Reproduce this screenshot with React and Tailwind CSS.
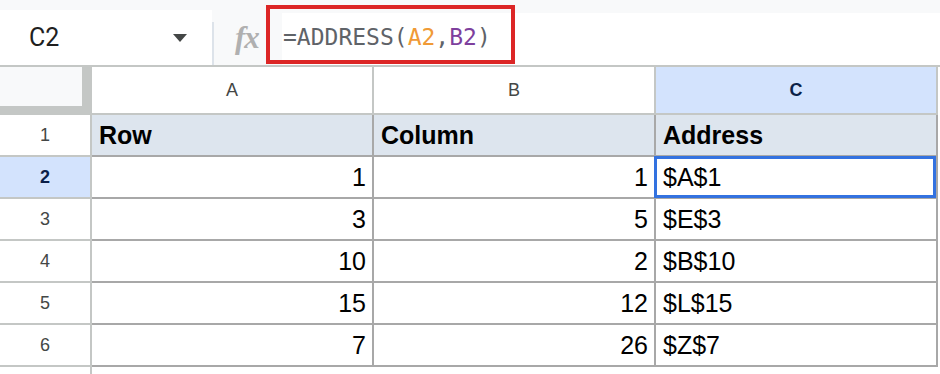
const rows = [
  { n: 2, a: "1", b: "1", c: "$A$1", selected: true },
  { n: 3, a: "3", b: "5", c: "$E$3" },
  { n: 4, a: "10", b: "2", c: "$B$10" },
  { n: 5, a: "15", b: "12", c: "$L$15" },
  { n: 6, a: "7", b: "26", c: "$Z$7" },
];

function Toolbar() {
  return (
    <div className="relative flex h-[67px] border-b-2 border-[#c4c7c5] bg-[#f8f9fa]">
      <div className="mt-[10px] flex h-[55px] w-[212px] items-center bg-white pl-[29px] font-['Roboto'] text-[25px] text-[#1f1f1f]">
        <span className="flex-1">C2</span>
        <svg width="14" height="8" viewBox="0 0 14 8" className="mr-[25px]">
          <path d="M0 0 L14 0 L7 8 Z" fill="#444746" />
        </svg>
      </div>
      <div className="mt-[22px] h-[43px] w-[2px] bg-[#dde3ea]" />
      <div className="flex w-[68px] items-center pl-[21px] pt-[10px]">
        <span className="font-['Liberation_Serif'] text-[31px] font-bold italic leading-none tracking-[-1px] text-[#b0b0b0]">
          fx
        </span>
      </div>
      <div className="mt-[13px] flex h-[52px] flex-1 items-center bg-white pb-[3px] pl-[1px] font-['DejaVu_Sans_Mono'] text-[23px] text-[#5f6368]">
        <span>=ADDRESS(</span>
        <span className="text-[#f09a36]">A2</span>
        <span>,</span>
        <span className="text-[#7e3f9d]">B2</span>
        <span>)</span>
      </div>
      <div className="absolute left-[266px] top-[5px] h-[59px] w-[249px] border-4 border-[#dc2626]" />
    </div>
  );
}

function HeaderRow() {
  return (
    <div className="flex h-[48px]">
      <div className="h-[48px] w-[92px] shrink-0 bg-[#c4c7c5]">
        <div className="h-[39px] w-[82px] bg-[#f8f9fa]" />
      </div>
      {["A", "B"].map((l) => (
        <div
          key={l}
          className="flex w-[282px] shrink-0 items-center justify-center border-b-2 border-r-2 border-[#c4c7c5] bg-white text-[18px] text-[#444746]"
        >
          {l}
        </div>
      ))}
      <div className="flex w-[282px] shrink-0 items-center justify-center border-b-2 border-r-2 border-[#c4c7c5] bg-[#d3e3fd] text-[18px] font-bold text-[#0b1f48]">
        C
      </div>
    </div>
  );
}

function RowHeader({ n, selected }) {
  return (
    <div
      className={
        "flex w-[92px] shrink-0 items-center justify-center border-b-2 border-r-2 border-[#c4c7c5] text-[18px] " +
        (selected ? "bg-[#d3e3fd] font-bold text-[#0b1f48]" : "bg-white text-[#444746]")
      }
    >
      {n}
    </div>
  );
}

export default function App() {
  return (
    <div className="h-[374px] w-[940px] overflow-hidden bg-white font-['Liberation_Sans',Arial,sans-serif]">
      <Toolbar />
      <HeaderRow />

      <div className="flex h-[42px]">
        <RowHeader n={1} />
        {["Row", "Column", "Address"].map((t) => (
          <div
            key={t}
            className="flex w-[282px] shrink-0 items-center border-b-2 border-r-2 border-[#a8a8a8] bg-[#dde5ee] pl-[7px] text-[25px] font-bold leading-none text-black"
          >
            {t}
          </div>
        ))}
      </div>

      {rows.map((r) => (
        <div key={r.n} className="flex h-[42px]">
          <RowHeader n={r.n} selected={r.selected} />
          <div className="flex w-[282px] shrink-0 items-center justify-end border-b-2 border-r-2 border-[#a8a8a8] pr-[6px] text-[25px] leading-none text-black">
            {r.a}
          </div>
          <div className="flex w-[282px] shrink-0 items-center justify-end border-b-2 border-r-2 border-[#a8a8a8] pr-[6px] text-[25px] leading-none text-black">
            {r.b}
          </div>
          <div className="relative flex w-[282px] shrink-0 items-center border-b-2 border-r-2 border-[#a8a8a8] pl-[7px] text-[25px] leading-none text-black">
            {r.c}
            {r.selected && (
              <div className="absolute -left-[2px] -top-[1px] bottom-[-1px] right-0 border-[3px] border-[#3372e0]" />
            )}
          </div>
        </div>
      ))}

      <div className="flex h-[20px]">
        <div className="w-[92px] shrink-0 border-r-2 border-[#c4c7c5]" />
      </div>
    </div>
  );
}
